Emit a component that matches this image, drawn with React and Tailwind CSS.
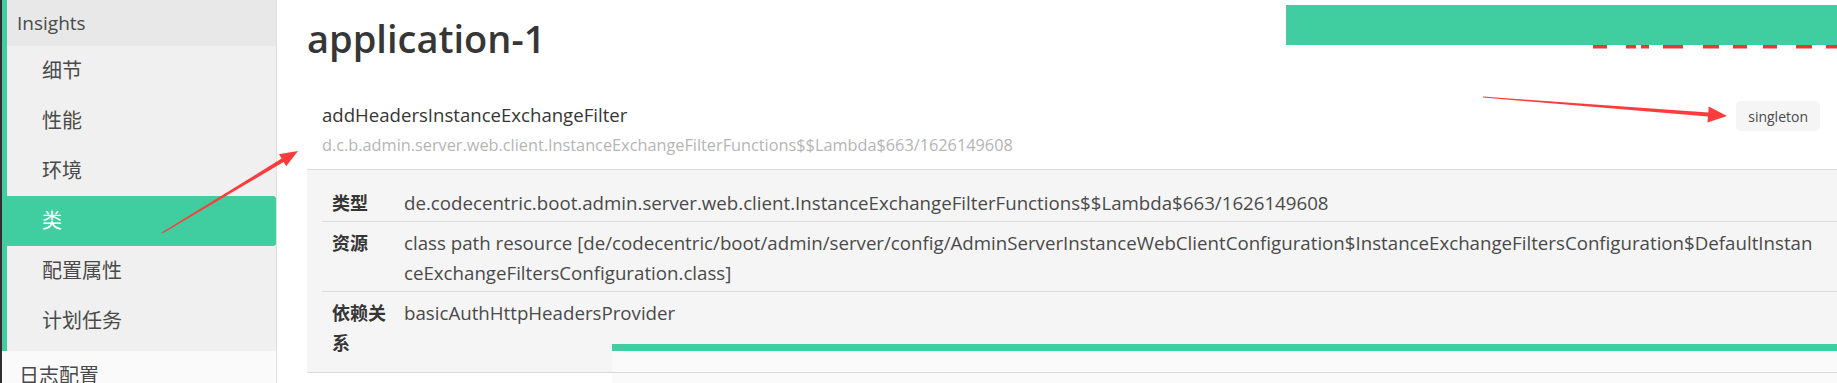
import React from 'react';

const subItems = ['细节', '性能', '环境', '类', '配置属性', '计划任务'];

const rows = [
  { label: '类型', value: ['de.codecentric.boot.admin.server.web.client.InstanceExchangeFilterFunctions$$Lambda$663/1626149608'] },
  {
    label: '资源',
    value: [
      'class path resource [de/codecentric/boot/admin/server/config/AdminServerInstanceWebClientConfiguration$InstanceExchangeFiltersConfiguration$DefaultInstan',
      'ceExchangeFiltersConfiguration.class]',
    ],
  },
  { label: '依赖关系', value: ['basicAuthHttpHeadersProvider'] },
];

// leftovers of the big red watermark under the top green bar
const redBits = [
  [1593, 14], [1626, 10], [1641, 8], [1663, 20], [1703, 16], [1733, 14], [1763, 14], [1796, 16], [1826, 11],
];

const Overlay = () => (
  <>
    <div className="absolute left-[1286px] top-[5px] h-[40px] w-[551px] bg-[#40cda0]" />
    <div className="absolute bottom-0 left-[612px] right-0 top-[344px] bg-[#fafafa]">
      <div className="h-[7px] bg-[#40cda0]" />
      <div className="mt-[21px] border-t border-[#dbdbdb]" />
    </div>
    <svg className="pointer-events-none absolute inset-0" width="1837" height="383" viewBox="0 0 1837 383">
      {redBits.map(([x, w]) => (
        <rect key={x} x={x} y="45" width={w} height="3.5" fill="#e53935" />
      ))}
      <polygon
        points="1483,96.6 1708.3,112.5 1708.7,106.5 1727,116 1707.5,122.5 1707.9,116.5 1483,97.6"
        fill="#ff3b3b"
      />
      <polygon
        points="162.3,233.4 283.6,162 286.2,166.3 298,151 279,154.3 281.6,158.6 161.7,232.6"
        fill="#ff3b3b"
      />
    </svg>
  </>
);

export default function App() {
  return (
    <div className="relative flex h-[383px] w-[1837px] overflow-hidden bg-white font-['Open_Sans','Noto_Sans_CJK_SC',sans-serif] text-[#4a4a4a]">
      <div className="w-[2px] shrink-0 bg-[#2e2e2e]" />

      {/* Sidebar */}
      <aside className="w-[275px] shrink-0 border-r border-[#dedede] bg-[#fafafa]">
        <div className="border-l-[5px] border-[#40cda0]">
          <div className="flex h-[46px] items-center bg-[#e8e8e8] pl-[10px] text-[19px] font-medium text-[#4a4a4a]">
            Insights
          </div>
          <ul className="bg-[#f0f0f0] pb-[5px]">
            {subItems.map((item) => (
              <li
                key={item}
                className={`flex h-[50px] items-center rounded-r-[3px] pl-[35px] text-[20px] ${
                  item === '类' ? 'bg-[#40cda0] text-white' : 'text-[#4a4a4a]'
                }`}
              >
                {item}
              </li>
            ))}
          </ul>
        </div>
        <div className="flex h-[50px] items-center pl-[17px] text-[20px] text-[#4a4a4a]">日志配置</div>
      </aside>

      {/* Main */}
      <main className="min-w-0 flex-1 pl-[30px] pt-[15px]">
        <h1 className="h-[46px] whitespace-nowrap text-[38px] font-semibold leading-[46px] text-[#363636]">
          application-1
        </h1>

        <div className="mt-[40px] flex items-start justify-between border-b border-[#dbdbdb] pb-[12px] pl-[15px] pr-[17px]">
          <div>
            <div className="text-[18.6px] leading-[28px] text-[#363636]">addHeadersInstanceExchangeFilter</div>
            <div className="mt-[4px] text-[16.3px] leading-[24px] text-[#b5b5b5]">
              d.c.b.admin.server.web.client.InstanceExchangeFilterFunctions$$Lambda$663/1626149608
            </div>
          </div>
          <span className="flex h-[30px] items-center rounded-[5px] bg-[#f5f5f5] px-[12px] text-[14px] text-[#4a4a4a]">
            singleton
          </span>
        </div>

        <div className="border-b border-[#dbdbdb] bg-[#f5f5f5] pb-[11px] pl-[15px] pt-[12px]">
          {rows.map((row, i) => (
            <div
              key={row.label}
              className={`flex pb-[3px] pt-[6px] ${i < rows.length - 1 ? 'border-b border-[#dbdbdb]' : ''}`}
            >
              <div className="w-[82px] shrink-0 pl-[10px] pr-[16px] text-[18px] font-bold leading-[30px] text-[#363636]">
                {row.label}
              </div>
              <div className="whitespace-nowrap text-[18.7px] leading-[30px] text-[#4a4a4a]">
                {row.value.map((line) => (
                  <div key={line}>{line}</div>
                ))}
              </div>
            </div>
          ))}
        </div>
      </main>

      <Overlay />
    </div>
  );
}
